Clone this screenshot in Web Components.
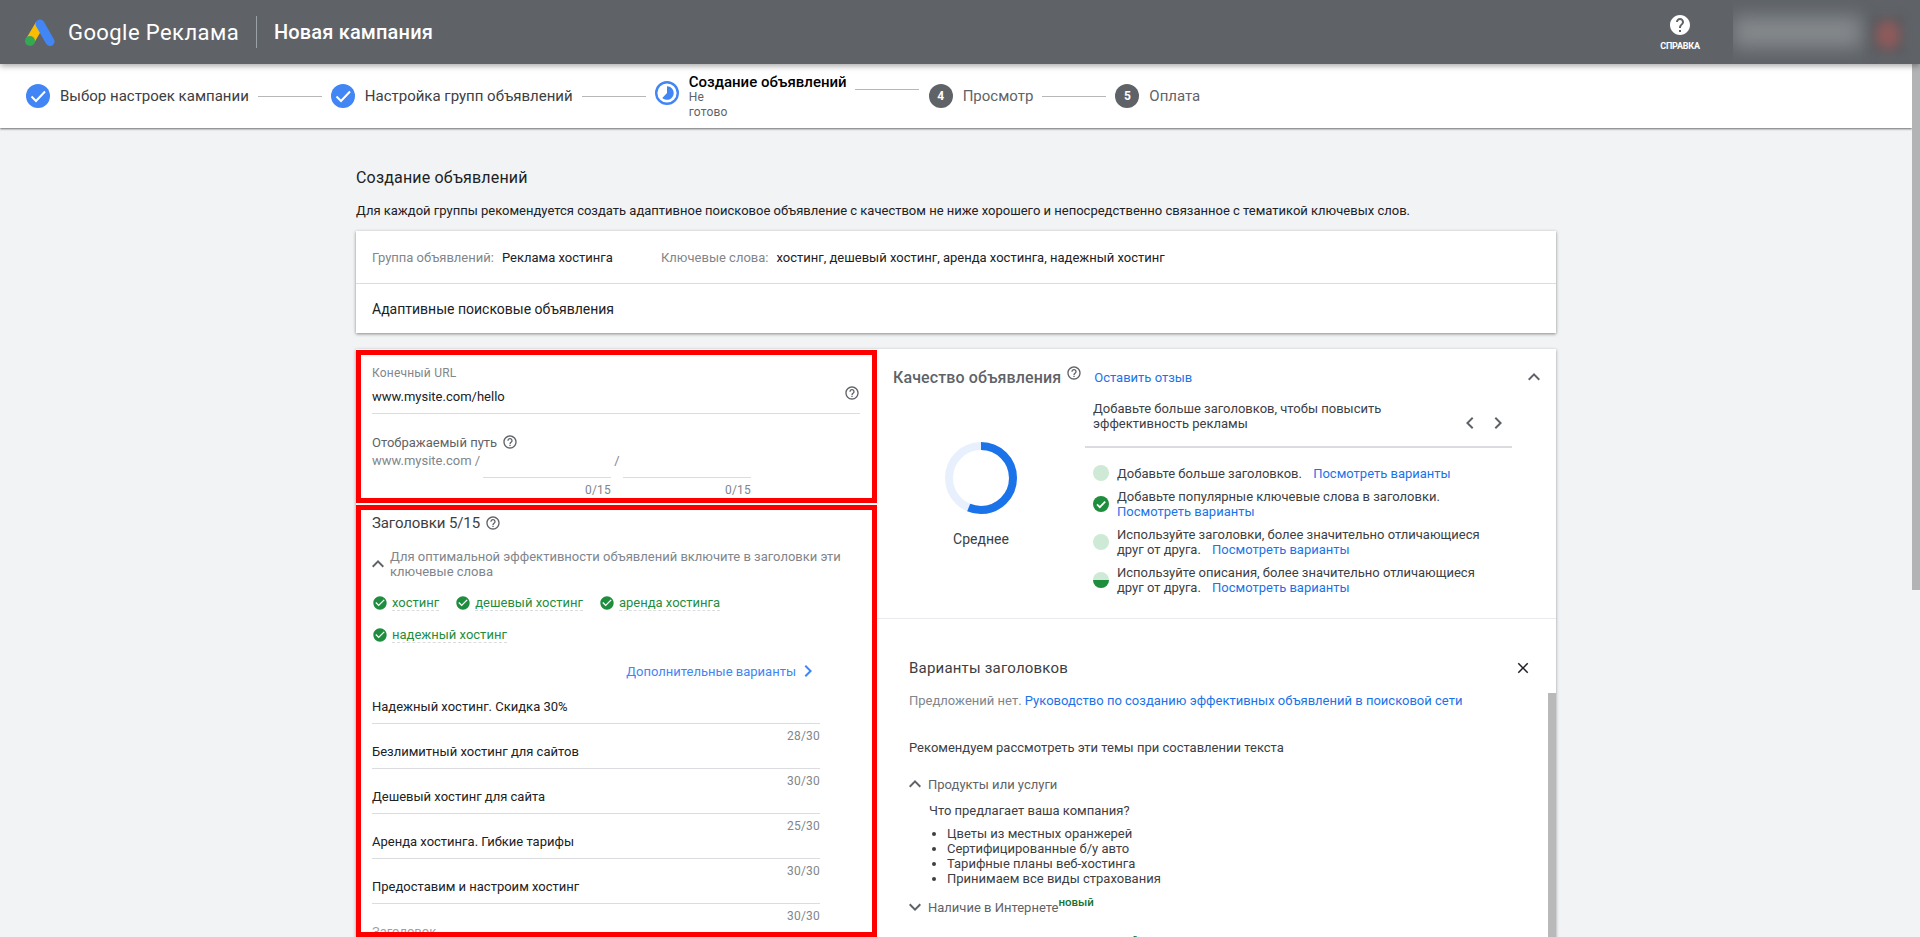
<!DOCTYPE html>
<html lang="ru">
<head>
<meta charset="utf-8">
<title>Google Реклама</title>
<style>
  html, body { margin: 0; height: 937px; overflow: hidden; background: #f1f3f4; }
  body { font-family: Roboto, "Noto Sans", sans-serif; font-size: 13px; color: #202124; }
  .below { display: flex; align-items: flex-start; height: 873px; }
  .main { width: 1912px; height: 873px; overflow: hidden; flex: none; }
  .scroll { width: 8px; height: 526px; background: #b2b3b5; flex: none; }
</style>
</head>
<body>
<app-header></app-header>
<div class="below">
  <div class="main">
    <step-bar></step-bar>
    <ad-page></ad-page>
  </div>
  <div class="scroll"></div>
</div>

<script>
const ICONS = {
  help: "M12 2C6.48 2 2 6.48 2 12s4.48 10 10 10 10-4.48 10-10S17.52 2 12 2zm1 17h-2v-2h2v2zm2.07-7.75l-.9.92C13.45 12.9 13 13.5 13 15h-2v-.5c0-1.1.45-2.1 1.17-2.83l1.24-1.26c.37-.36.59-.86.59-1.41 0-1.1-.9-2-2-2s-2 .9-2 2H8c0-2.21 1.79-4 4-4s4 1.79 4 4c0 .88-.36 1.68-.93 2.25z",
  helpOutline: "M11 18h2v-2h-2v2zm1-16C6.48 2 2 6.48 2 12s4.48 10 10 10 10-4.48 10-10S17.52 2 12 2zm0 18c-4.41 0-8-3.59-8-8s3.59-8 8-8 8 3.59 8 8-3.59 8-8 8zm0-14c-2.21 0-4 1.79-4 4h2c0-1.1.9-2 2-2s2 .9 2 2c0 2-3 1.75-3 5h2c0-2.25 3-2.5 3-5 0-2.21-1.79-4-4-4z",
  check: "M12 2C6.48 2 2 6.48 2 12s4.48 10 10 10 10-4.48 10-10S17.52 2 12 2zm-2 15l-5-5 1.41-1.41L10 14.17l7.59-7.59L19 8l-9 9z",
  up: "M12 8l-6 6 1.41 1.41L12 10.83l4.59 4.58L18 14z",
  down: "M16.59 8.59L12 13.17 7.41 8.59 6 10l6 6 6-6z",
  right: "M10 6L8.59 7.41 13.17 12l-4.58 4.59L10 18l6-6z",
  left: "M15.41 7.41L14 6l-6 6 6 6 1.41-1.41L10.83 12z",
  close: "M19 6.41L17.59 5 12 10.59 6.41 5 5 6.41 10.59 12 5 17.59 6.41 19 12 13.41 17.59 19 19 17.59 13.41 12z"
};

class AdsIcon extends HTMLElement {
  connectedCallback() {
    const size = this.getAttribute("size") || 16;
    const color = this.getAttribute("color") || "#5f6368";
    this.attachShadow({ mode: "open" }).innerHTML = `
      <style>:host { display: inline-flex; flex: none; width: ${size}px; height: ${size}px; } svg { display: block; }</style>
      <svg width="${size}" height="${size}" viewBox="0 0 24 24" fill="${color}"><path d="${ICONS[this.getAttribute("name")]}"/></svg>`;
  }
}
customElements.define("ads-icon", AdsIcon);

class AppHeader extends HTMLElement {
  connectedCallback() {
    this.attachShadow({ mode: "open" }).innerHTML = `
      <style>
        :host { display: flex; align-items: center; height: 64px; background: #5f6368; color: #fff; padding-left: 25px;
                position: relative; z-index: 2; box-shadow: 0 2px 6px rgba(0,0,0,.35); font-family: Roboto, sans-serif; }
        .blobs { display: flex; align-items: center; height: 64px; overflow: hidden; margin-left: 33px; padding-right: 15px; }
        .brand { margin-left: 13px; font-size: 22px; width: 188px; white-space: nowrap; letter-spacing: .42px; }
        .sep { width: 1px; height: 32px; background: #9aa0a6; }
        .name { margin-left: 17px; font-size: 20px; font-weight: 500; letter-spacing: .16px; }
        .help { margin-left: auto; width: 40px; display: flex; flex-direction: column; align-items: center; gap: 4px; }
        .help span { font-size: 9px; font-weight: 700; white-space: nowrap; letter-spacing: -.2px; line-height: 11px; }
        .gray { width: 128px; height: 32px; background: #84888b; filter: blur(9px); }
        .red { width: 34px; height: 40px; margin: 6px 0 0 10px; background: radial-gradient(closest-side, #8f5a5b 40%, #5a5b5f 100%); filter: blur(4px); }
      </style>
      <svg width="30" height="27" viewBox="0 0 30 27">
        <path d="M15 5 L5 22" stroke="#fbbc04" stroke-width="9"/>
        <path d="M15 5 L25 22.5" stroke="#4285f4" stroke-width="9" stroke-linecap="round"/>
        <circle cx="5" cy="22" r="5" fill="#34a853"/>
      </svg>
      <div class="brand">Google Реклама</div>
      <div class="sep"></div>
      <div class="name">Новая кампания</div>
      <div class="help"><ads-icon name="help" size="24" color="#fff"></ads-icon><span>СПРАВКА</span></div>
      <div class="blobs"><div class="gray"></div><div class="red"></div></div>`;
  }
}
customElements.define("app-header", AppHeader);

class StepItem extends HTMLElement {
  connectedCallback() {
    const state = this.getAttribute("state");
    const num = this.getAttribute("num");
    let icon = `<span class="num">${num}</span>`;
    if (state === "done") {
      icon = `<svg width="24" height="24" viewBox="0 0 24 24"><circle cx="12" cy="12" r="12" fill="#4285f4"/><path d="M5.5 12.5l4.5 4.5 9-9.5" fill="none" stroke="#fff" stroke-width="2"/></svg>`;
    } else if (state === "progress") {
      icon = `<svg class="now" width="24" height="24" viewBox="0 0 24 24"><circle cx="12" cy="12" r="10.8" fill="none" stroke="#4285f4" stroke-width="2.4"/><path d="M12 5.2A6.8 6.8 0 1 1 7.3 17L12 12z" fill="#4285f4"/></svg>`;
    }
    this.attachShadow({ mode: "open" }).innerHTML = `
      <style>
        :host { display: flex; align-items: center; gap: 10px; font-family: Roboto, sans-serif; font-size: 15px; color: #3c4043; white-space: nowrap; }
        :host([state=todo]) { color: #5f6368; }
        .num { width: 24px; height: 24px; flex: none; border-radius: 50%; background: #5f6368; color: #fff; font-size: 12px; font-weight: 700; display: flex; align-items: center; justify-content: center; }
        svg { display: block; flex: none; }
        .now { margin-bottom: 6px; }
        :host([state=progress]) { color: #000; font-weight: 500; }
        :host([state=progress]) .text { margin-top: 2px; }
        .title { line-height: 16px; }
        ::slotted([slot=sub]) { display: block; width: min-content; white-space: normal; font-size: 12px; font-weight: 400; line-height: 15px; color: #5f6368; letter-spacing: .2px; }
      </style>
      ${icon}
      <div class="text"><div class="title"><slot></slot></div><slot name="sub"></slot></div>`;
  }
}
customElements.define("step-item", StepItem);

class StepBar extends HTMLElement {
  connectedCallback() {
    this.attachShadow({ mode: "open" }).innerHTML = `
      <style>
        :host { display: flex; align-items: center; height: 64px; padding-left: 26px; background: #fff; box-shadow: 0 1px 2px rgba(60,64,67,.75); position: relative; z-index: 1; }
        i { display: block; width: 64px; height: 1px; background: #b5b7b9; margin: 0 9px 0 9px; flex: none; }
        i.high { margin-bottom: 14px; margin-left: 8px; margin-right: 10px; }
      </style>
      <step-item state="done">Выбор настроек кампании</step-item><i></i>
      <step-item state="done">Настройка групп объявлений</step-item><i></i>
      <step-item state="progress">Создание объявлений<span slot="sub">Не готово</span></step-item><i class="high"></i>
      <step-item state="todo" num="4">Просмотр</step-item><i></i>
      <step-item state="todo" num="5">Оплата</step-item>`;
  }
}
customElements.define("step-bar", StepBar);

class KeywordChip extends HTMLElement {
  connectedCallback() {
    this.attachShadow({ mode: "open" }).innerHTML = `
      <style>
        :host { display: flex; align-items: center; gap: 4px; height: 24px; color: #1e8e3e; }
        span { line-height: 15px; border-bottom: 1px dashed #dadce0; }
      </style>
      <ads-icon name="check" color="#1e8e3e"></ads-icon><span><slot></slot></span>`;
  }
}
customElements.define("keyword-chip", KeywordChip);

class HeadlineField extends HTMLElement {
  connectedCallback() {
    this.attachShadow({ mode: "open" }).innerHTML = `
      <style>
        :host { display: block; width: 448px; height: 45px; }
        .v { height: 25px; line-height: 18px; border-bottom: 1px solid #dadce0; color: #202124; }
        .c { margin-top: 5px; line-height: 14px; font-size: 12px; text-align: right; color: #80868b; letter-spacing: .2px; }
      </style>
      <div class="v"><slot></slot></div>
      <div class="c">${this.getAttribute("count")}</div>`;
  }
}
customElements.define("headline-field", HeadlineField);

class UrlPanel extends HTMLElement {
  connectedCallback() {
    this.attachShadow({ mode: "open" }).innerHTML = `
      <style>
        :host { display: block; box-sizing: border-box; height: 153px; border: 5px solid #f00; padding: 11px 12px 0 11px; }
        .label { font-size: 12px; line-height: 14px; color: #80868b; letter-spacing: .2px; }
        .url { display: flex; justify-content: space-between; margin-top: 8px; height: 25px; line-height: 18px; border-bottom: 1px solid #dadce0; color: #202124; font-size: 13px; }
        .url ads-icon { margin-top: -3px; }
        .path-label { display: flex; align-items: center; gap: 5px; margin-top: 20px; height: 16px; color: #5f6368; font-size: 13px; }
        .path { display: flex; margin-top: 3px; color: #80868b; line-height: 16px; }
        .prefix { width: 111px; flex: none; white-space: nowrap; }
        .slash { width: 12px; text-align: center; flex: none; }
        .field { width: 128px; height: 24px; border-bottom: 1px solid #dadce0; flex: none; }
        .counts { display: flex; margin: 5px 0 0 111px; font-size: 12px; line-height: 14px; color: #80868b; letter-spacing: .2px; }
        .counts div { width: 128px; text-align: right; margin-right: 12px; }
      </style>
      <div class="label">Конечный URL</div>
      <div class="url">www.mysite.com/hello<ads-icon name="helpOutline"></ads-icon></div>
      <div class="path-label">Отображаемый путь<ads-icon name="helpOutline"></ads-icon></div>
      <div class="path"><div class="prefix">www.mysite.com /</div><div class="field"></div><div class="slash">/</div><div class="field"></div></div>
      <div class="counts"><div>0/15</div><div>0/15</div></div>`;
  }
}
customElements.define("url-panel", UrlPanel);

class HeadlinesPanel extends HTMLElement {
  connectedCallback() {
    this.attachShadow({ mode: "open" }).innerHTML = `
      <style>
        :host { display: block; box-sizing: border-box; height: 432px; margin-top: 2px; border: 5px solid #f00; padding: 3px 12px 0 11px; overflow: hidden; }
        h3 { margin: 0; display: flex; align-items: center; gap: 5px; font-size: 15px; font-weight: 400; line-height: 20px; color: #3c4043; letter-spacing: -.1px; }
        .hint { display: flex; align-items: center; margin: 16px 0 0 -6px; line-height: 15px; color: #80868b; }
        .hint div { width: 470px; }
        .chips { display: flex; flex-wrap: wrap; gap: 8px 16px; margin-top: 12px; }
        .more { display: flex; align-items: center; justify-content: flex-end; width: 448px; height: 24px; margin-top: 12px; color: #4285f4; }
        .fields { margin-top: 15px; }
        .next { line-height: 18px; color: #9aa0a6; }
      </style>
      <h3>Заголовки 5/15<ads-icon name="helpOutline"></ads-icon></h3>
      <div class="hint"><ads-icon name="up" size="24"></ads-icon><div>Для оптимальной эффективности объявлений включите в заголовки эти ключевые слова</div></div>
      <div class="chips">
        <keyword-chip>хостинг</keyword-chip>
        <keyword-chip>дешевый хостинг</keyword-chip>
        <keyword-chip>аренда хостинга</keyword-chip>
        <keyword-chip>надежный хостинг</keyword-chip>
      </div>
      <div class="more">Дополнительные варианты<ads-icon name="right" size="24" color="#4285f4"></ads-icon></div>
      <div class="fields">
        <headline-field count="28/30">Надежный хостинг. Скидка 30%</headline-field>
        <headline-field count="30/30">Безлимитный хостинг для сайтов</headline-field>
        <headline-field count="25/30">Дешевый хостинг для сайта</headline-field>
        <headline-field count="30/30">Аренда хостинга. Гибкие тарифы</headline-field>
        <headline-field count="30/30">Предоставим и настроим хостинг</headline-field>
      </div>
      <div class="next">Заголовок</div>`;
  }
}
customElements.define("headlines-panel", HeadlinesPanel);

class QualityTip extends HTMLElement {
  connectedCallback() {
    const kind = this.getAttribute("kind");
    let dot = `<circle cx="8" cy="8" r="8" fill="#ceead6"/>`;
    if (kind === "done") {
      dot = `<circle cx="8" cy="8" r="8" fill="#1e8e3e"/><path d="M4 8.4l2.8 2.8L12.2 5.6" fill="none" stroke="#fff" stroke-width="1.7"/>`;
    } else if (kind === "half") {
      dot = `<circle cx="8" cy="8" r="8" fill="#ceead6"/><path d="M0 8a8 8 0 0 0 16 0z" fill="#1e8e3e"/>`;
    }
    this.attachShadow({ mode: "open" }).innerHTML = `
      <style>
        :host { display: flex; align-items: center; gap: 8px; line-height: 15px; color: #3c4043; }
        svg { flex: none; }
        div { width: 375px; }
        span { margin-right: 8px; }
        a { color: #1a73e8; white-space: nowrap; }
      </style>
      <svg width="16" height="16" viewBox="0 0 16 16">${dot}</svg>
      <div><span><slot></slot></span> <a>Посмотреть варианты</a></div>`;
  }
}
customElements.define("quality-tip", QualityTip);

class QualityPanel extends HTMLElement {
  connectedCallback() {
    this.attachShadow({ mode: "open" }).innerHTML = `
      <style>
        :host { display: block; box-sizing: border-box; height: 270px; padding: 16px 10px 0 16px; border-bottom: 1px solid #e8eaed; }
        .head { display: flex; align-items: center; height: 24px; }
        h2 { margin: 0; font-size: 16px; font-weight: 500; color: #5f6368; letter-spacing: .12px; }
        .head ads-icon { margin-left: 5px; }
        .head ads-icon.q { margin-top: -8px; }
        .head a { margin-left: 12px; color: #1a73e8; }
        .head .fold { margin-left: auto; }
        .body { display: grid; grid-template-columns: 176px 427px; gap: 16px; margin-top: 12px; }
        .score { display: flex; flex-direction: column; align-items: center; padding-top: 41px; }
        .score svg { display: block; }
        .score div { margin-top: 16px; font-size: 14px; line-height: 18px; color: #3c4043; }
        .tip { display: flex; justify-content: space-between; padding: 0 2px 15px 8px; line-height: 15px; color: #3c4043; border-bottom: 2px solid #dadce0; }
        .tip div { width: 320px; }
        .tip .arrows { display: flex; width: auto; gap: 4px; margin: 10px 0 -4px; height: 24px; }
        .list { display: flex; flex-direction: column; gap: 8px; margin: 17px 0 0 8px; }
      </style>
      <div class="head">
        <h2>Качество объявления</h2><ads-icon class="q" name="helpOutline"></ads-icon>
        <a>Оставить отзыв</a>
        <ads-icon class="fold" name="up" size="24"></ads-icon>
      </div>
      <div class="body">
        <div class="score">
          <svg width="72" height="72" viewBox="0 0 72 72">
            <circle cx="36" cy="36" r="32" fill="none" stroke="#e8f0fe" stroke-width="8"/>
            <circle cx="36" cy="36" r="32" fill="none" stroke="#1a73e8" stroke-width="8" stroke-dasharray="113 201" transform="rotate(-90 36 36)"/>
          </svg>
          <div>Среднее</div>
        </div>
        <div>
          <div class="tip">
            <div>Добавьте больше заголовков, чтобы повысить эффективность рекламы</div>
            <div class="arrows"><ads-icon name="left" size="24"></ads-icon><ads-icon name="right" size="24"></ads-icon></div>
          </div>
          <div class="list">
            <quality-tip>Добавьте больше заголовков.</quality-tip>
            <quality-tip kind="done">Добавьте популярные ключевые слова в заголовки.</quality-tip>
            <quality-tip>Используйте заголовки, более значительно отличающиеся друг от друга.</quality-tip>
            <quality-tip kind="half">Используйте описания, более значительно отличающиеся друг от друга.</quality-tip>
          </div>
        </div>
      </div>`;
  }
}
customElements.define("quality-panel", QualityPanel);

class SuggestPanel extends HTMLElement {
  connectedCallback() {
    this.attachShadow({ mode: "open" }).innerHTML = `
      <style>
        :host { display: block; position: relative; height: 318px; overflow: hidden; padding: 37px 0 0 32px; box-sizing: border-box; color: #3c4043; }
        .top { display: flex; align-items: center; justify-content: space-between; height: 24px; padding-right: 24px; font-size: 15px; letter-spacing: .2px; }
        .note { margin-top: 13px; line-height: 16px; color: #80868b; }
        .note a { color: #1a73e8; }
        .rec { margin-top: 31px; line-height: 16px; font-size: 13px; }
        .group { display: flex; align-items: center; height: 24px; margin: 16px 0 0 -6px; color: #5f6368; }
        .group ads-icon { margin-right: 1px; }
        .group b { font-size: 11.5px; font-weight: 500; color: #137333; align-self: flex-start; line-height: 14px; }
        .q { margin: 7px 0 0 20px; line-height: 16px; }
        ul { margin: 7px 0 0; padding: 0 0 0 38px; line-height: 15px; }
        .bar { position: absolute; top: 74px; right: 0; bottom: 0; width: 8px; background: #b9b9b9; }
      </style>
      <div class="top">Варианты заголовков<ads-icon name="close" size="18" color="#202124"></ads-icon></div>
      <div class="note">Предложений нет. <a>Руководство по созданию эффективных объявлений в поисковой сети</a></div>
      <div class="rec">Рекомендуем рассмотреть эти темы при составлении текста</div>
      <div class="group"><ads-icon name="up" size="24"></ads-icon>Продукты или услуги</div>
      <div class="q">Что предлагает ваша компания?</div>
      <ul>
        <li>Цветы из местных оранжерей</li>
        <li>Сертифицированные б/у авто</li>
        <li>Тарифные планы веб-хостинга</li>
        <li>Принимаем все виды страхования</li>
      </ul>
      <div class="group" style="margin-top:9px"><ads-icon name="down" size="24"></ads-icon>Наличие в Интернете<b>новый</b></div>
      <div class="group" style="margin-top:14px"><span style="width:200px"></span><b>новый</b></div>
      <div class="bar"></div>`;
  }
}
customElements.define("suggest-panel", SuggestPanel);

class AdPage extends HTMLElement {
  connectedCallback() {
    this.attachShadow({ mode: "open" }).innerHTML = `
      <style>
        :host { display: block; width: 1200px; margin: 0 auto; padding-top: 40px; font-family: Roboto, sans-serif; font-size: 13px; }
        h1 { margin: 0; font-size: 16px; font-weight: 400; line-height: 20px; color: #202124; letter-spacing: .18px; }
        .desc { margin-top: 15px; line-height: 16px; color: #202124; white-space: nowrap; }
        .card { margin-top: 12px; background: #fff; box-shadow: 0 1px 3px rgba(60,64,67,.6); }
        .meta { display: flex; align-items: center; height: 53px; padding-left: 16px; border-bottom: 1px solid #dadce0; box-sizing: border-box; }
        .meta span { color: #80868b; margin-right: 8px; }
        .meta div { width: 289px; flex: none; }
        .meta div + div { width: auto; }
        .kind { display: flex; align-items: center; height: 49px; padding-left: 16px; font-size: 14px; }
        .lower { display: flex; margin-top: 16px; background: #fff; box-shadow: 0 1px 3px rgba(60,64,67,.5); height: 600px; }
        .left { width: 521px; padding-top: 1px; flex: none; box-sizing: border-box; }
        .right { flex: 1; min-width: 0; }
      </style>
      <h1>Создание объявлений</h1>
      <div class="desc">Для каждой группы рекомендуется создать адаптивное поисковое объявление с качеством не ниже хорошего и непосредственно связанное с тематикой ключевых слов.</div>
      <div class="card">
        <div class="meta">
          <div><span>Группа объявлений:</span>Реклама хостинга</div>
          <div><span>Ключевые слова:</span>хостинг, дешевый хостинг, аренда хостинга, надежный хостинг</div>
        </div>
        <div class="kind">Адаптивные поисковые объявления</div>
      </div>
      <div class="lower">
        <div class="left"><url-panel></url-panel><headlines-panel></headlines-panel></div>
        <div class="right"><quality-panel></quality-panel><suggest-panel></suggest-panel></div>
      </div>`;
  }
}
customElements.define("ad-page", AdPage);
</script>
</body>
</html>
